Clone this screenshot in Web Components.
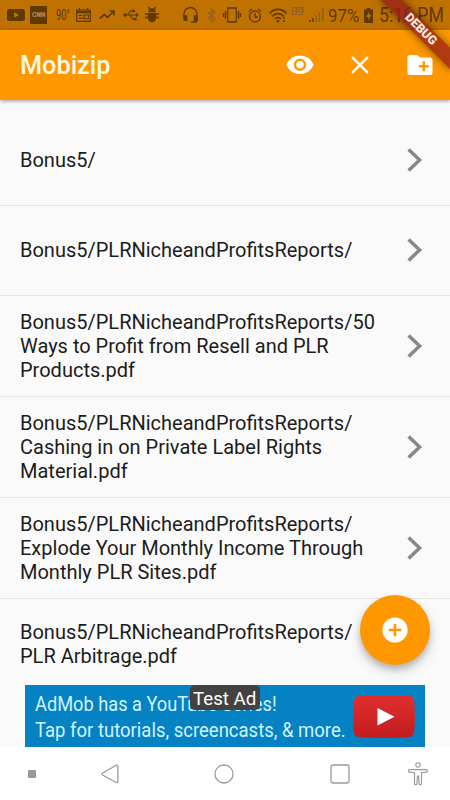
<!DOCTYPE html>
<html lang="en">
<head>
<meta charset="utf-8">
<title>Mobizip</title>
<style>
html,body{margin:0;padding:0;background:#fafafa}
</style>
</head>
<body>
<mobizip-app></mobizip-app>
<script>
const define = (name, html, setup) => customElements.define(name, class extends HTMLElement {
  connectedCallback() {
    if (this.shadowRoot) return;
    const t = document.createElement('template');
    t.innerHTML = html;
    this.attachShadow({mode: 'open'}).append(t.content.cloneNode(true));
    if (setup) setup(this, this.shadowRoot);
  }
});

/* Single line of text, condensed or expanded to a given width. */
define('fit-text', `<style>
:host{display:block;white-space:nowrap;flex:none}
span{display:inline-block;transform-origin:0 50%}
</style><span><slot></slot></span>`, (el, root) => {
  const w = +el.getAttribute('width'), s = root.querySelector('span');
  el.style.width = w + 'px';
  s.style.transform = `scaleX(${w / s.offsetWidth})`;
});

const icons = {
youtube:[18,12,'<rect width="18" height="12" rx="2.5" fill="#603900"/><path d="M7 3.2v5.6L12 6z" fill="#bf7200"/>'],
news:[15,14,'<path d="M.7 2h13.6v11.3H.7z" fill="none" stroke="#603900" stroke-width="1.2"/><path d="M0 4h15" stroke="#603900" stroke-width="2.4"/><path d="M3.5 0v2M11.5 0v2M2.8 7.4h3.6M2.8 10.2h3.6" fill="none" stroke="#603900" stroke-width="1.2"/><path d="M8 7h4.500v3.800H8z" fill="none" stroke="#603900" stroke-width="1.1"/>'],
trend:[16,10,'<path d="M.8 8.500l4.600-4.100 3 3L14 2M10.800 1H15v4.200" fill="none" stroke="#603900" stroke-width="1.700"/>'],
usb:[16,12,'<g fill="none" stroke="#603900" stroke-width="1.2"><path d="M2 6h12M4.500 6l3-4h2M7 6l2.500 4h2"/></g><circle cx="2" cy="6" r="1.800" fill="#603900"/><path d="M13 3.800L16 6l-3 2.200zM9 .7h3v2.600H9zM10.500 8.700h3v2.600h-3z" fill="#603900"/>'],
bug:[14,16,'<path d="M3.500 5.200a3.500 4 0 0 1 7 0zM2.700 6.300h8.600v4.200a4.300 5 0 0 1-8.600 0z" fill="#603900"/><path d="M3.500 0l1.300 2M10.500 0L9.200 2M0 7h14M0 10.500h14" stroke="#603900" stroke-width="1.400"/>'],
headset:[15,16,'<path d="M1 9V7a6.500 6.500 0 0 1 13 0v6.500c0 1-.5 1.500-1.500 1.500H8" fill="none" stroke="#603900" stroke-width="1.400"/><path d="M.3 8.300h4V14H2.200C1 14 .3 13.200.3 12zM10.700 8.300h4V14h-4z" fill="#603900"/>'],
bluetooth:[9,15,'<path d="M.8 4l7 6.800L4.500 14V1l3.300 3.200L.8 11" fill="none" stroke="#906026" stroke-width="1.300"/>'],
vibrate:[18,16,'<path d="M4.700 1h8.600v14H4.700zM2.500 4v8M.6 6v4M15.500 4v8M17.400 6v4" fill="none" stroke="#603900" stroke-width="1.300"/>'],
alarm:[14,15,'<circle cx="7" cy="8.500" r="5.500" fill="none" stroke="#603900" stroke-width="1.300"/><path d="M7 5v4h3M.7 3.600L4 1M13.300 3.600L10 1" fill="none" stroke="#603900" stroke-width="1.300"/>'],
wifi:[18,15,'<path d="M.7 5.300c4.700-5.200 12-5.200 16.600 0M3.200 8.300c3.200-3.600 8.300-3.600 11.500 0M6 11c1.800-1.900 4.200-1.900 6 0" fill="none" stroke="#603900" stroke-width="1.800"/><circle cx="9" cy="13.200" r="1.300" fill="#603900"/><path d="M14 10h2M14 13h2" stroke="#603900" stroke-width="1.500"/>'],
signal:[15,14,'<path d="M1 12v2M4 10v4" stroke="#603900" stroke-width="1.500"/><path d="M7.200 7v7M10.400 4v10M13.800 0v14" stroke="#96601c" stroke-width="1.500"/>'],
battery:[9,15,'<path d="M2.800 0h3.400v1.500H9V15H0V1.500h2.800z" fill="#603900"/><path d="M5.500 3.500L2 9h2.300v3.500L7.200 7H5z" fill="#bf7200"/>'],
eye:[28,20,'<path fill="#fff" d="M14 .5C7.800.5 2.500 4.300.4 9.800 2.500 15.300 7.800 19.100 14 19.100s11.500-3.800 13.600-9.300C25.500 4.300 20.200.5 14 .5zm0 15.500a6.200 6.200 0 1 1 0-12.400 6.200 6.200 0 0 1 0 12.400zm0-9.900a3.700 3.700 0 1 0 0 7.400 3.700 3.700 0 0 0 0-7.400z"/>'],
close:[18,18,'<path d="M1.100 1.100l15.800 15.800M16.900 1.100L1.100 16.900" stroke="#fff" stroke-width="2.400"/>'],
folder:[26,20,'<path fill="#fff" fill-rule="evenodd" d="M23 2.500H13L10.500 0H3A2.500 2.500 0 0 0 .5 2.500v15A2.500 2.500 0 0 0 3 20h20a2.500 2.500 0 0 0 2.500-2.500V5A2.500 2.500 0 0 0 23 2.500zM21.700 12.500H18v3.750h-2.500V12.500h-3.700V10h3.700V6.250H18V10h3.700z"/>'],
chevron:[16,24,'<path d="M1.600 1.500L12.600 12 1.600 22.500" fill="none" stroke="#888" stroke-width="3.500"/>'],
add:[26,26,'<circle cx="13" cy="13" r="12.600" fill="#fff"/><path d="M13 6.700v12.600M6.700 13h12.600" stroke="#ff9800" stroke-width="2.500"/>'],
play:[62,43,'<defs><linearGradient id="g" x2="0" y2="1"><stop stop-color="#e02f2f"/><stop offset="1" stop-color="#c21c1f"/></linearGradient></defs><path fill="url(#g)" d="M7 .8Q31-.8 55 .8q6 .4 6.400 6.500 1 14.200 0 28.400-.4 6.100-6.400 6.500-24 1.600-48 0-6-.4-6.400-6.500-1-14.200 0-28.400Q1 1.200 7 .8z"/><path d="M24.500 13v17.500l17-8.700z" fill="#fff"/>'],
dot:[8,8,'<rect width="8" height="8" rx="1" fill="#9a9a9a"/>'],
back:[18,20,'<path d="M15.200 1.300L2 8.700c-1.300.8-1.300 1.900 0 2.600l13.200 7.200c1 .5 1.700 0 1.700-1V2.300c0-1-.7-1.500-1.700-1z" fill="none" stroke="#9a9a9a" stroke-width="1.300"/>'],
home:[20,20,'<circle cx="10" cy="10" r="9" fill="none" stroke="#9a9a9a" stroke-width="1.300"/>'],
recent:[20,20,'<rect x="1" y="1" width="18" height="18" rx="1.800" fill="none" stroke="#9a9a9a" stroke-width="1.300"/>'],
person:[20,24,'<g fill="none" stroke="#9a9a9a" stroke-width="1.200"><circle cx="10" cy="3" r="2.200"/><path d="M1.500 7.700h17c1.200 0 1.200 2.500 0 2.500l-5 .5v11.100c0 1.200-2.200 1.200-2.400 0L10.500 14h-1L8.900 21.800c-.2 1.200-2.400 1.200-2.400 0V10.700l-5-.5C.3 10.200.3 7.700 1.500 7.700z"/></g>']
};
define('m-icon', `<style>:host{display:block;flex:none}svg{display:block;overflow:visible}</style>`, (el, root) => {
  const [w, h, body] = icons[el.getAttribute('name')];
  root.innerHTML += `<svg width="${w}" height="${h}" viewBox="0 0 ${w} ${h}">${body}</svg>`;
});

define('status-bar', `<style>
:host{display:flex;height:30px;box-sizing:border-box;padding-left:7px;background:#bf7200;color:#603900;align-items:center;font:19.5px/30px Roboto,sans-serif}
.net{font-size:7px;font-weight:700;border:1px solid #96601c;color:#96601c;box-sizing:border-box;height:8px;margin-top:-8px;margin-left:5px;line-height:6px}
.cnn{margin-left:5px;width:17px;height:18px;box-sizing:border-box;padding-left:2px;background:#603900;color:#b58a55;font:900 8px/18px Roboto,sans-serif}
</style>
<m-icon name="youtube"></m-icon>
<div class="cnn"><fit-text width="13">CNN</fit-text></div>
<fit-text width="14" style="margin-left:9px;font-size:15.5px">90°</fit-text>
<m-icon name="news" style="margin-left:6px"></m-icon>
<m-icon name="trend" style="margin-left:8px"></m-icon>
<m-icon name="usb" style="margin-left:8px"></m-icon>
<m-icon name="bug" style="margin-left:6px"></m-icon>
<m-icon name="headset" style="margin-left:24px"></m-icon>
<m-icon name="bluetooth" style="margin-left:9px"></m-icon>
<m-icon name="vibrate" style="margin-left:7px"></m-icon>
<m-icon name="alarm" style="margin-left:7px"></m-icon>
<m-icon name="wifi" style="margin-left:7px"></m-icon>
<fit-text class="net" width="11">4G</fit-text>
<m-icon name="signal" style="margin-left:6px"></m-icon>
<fit-text width="31" style="margin-left:3.5px;font-size:18px;padding-top:1px">97%</fit-text>
<m-icon name="battery" style="margin-left:5.5px"></m-icon>
<fit-text width="65" style="margin-left:5.5px;padding-top:2px">5:16 PM</fit-text>`);

define('app-bar', `<style>
:host{display:flex;position:relative;z-index:1;height:70px;align-items:center;background:#ff9800;padding:0 19px 0 20px;box-sizing:border-box;box-shadow:0 1px 4px rgba(0,0,0,.4)}
h1{margin:0;flex:1;font:500 25px/30px Roboto,sans-serif;color:#fff8e4;padding-top:1px}
nav{display:flex;align-items:center}
</style><h1><fit-text width="90"><slot></slot></fit-text></h1><nav>
<m-icon name="eye"></m-icon><m-icon name="close" style="margin-left:37px"></m-icon><m-icon name="folder" style="margin:0 -2px 0 38px"></m-icon></nav>`);

define('file-row', `<style>
:host{display:flex;box-sizing:border-box;height:90px;border-bottom:1px solid #e6e6e6;padding:0 27px 0 20px;align-items:center;justify-content:space-between}
:host([tall]){height:101.2px}
:host(:last-of-type){border-bottom-color:transparent}
.t{font:20px/23.8px Roboto,sans-serif;color:#1c1c1c;white-space:nowrap;padding-top:1px}
:host([tall]) .t{padding-top:2px}
:host(:last-of-type) .t{padding-top:3px}
</style><div class="t"><slot></slot></div><m-icon name="chevron"></m-icon>`);

define('ad-banner', `<style>
:host{display:flex;position:relative;width:400px;height:62px;box-sizing:border-box;background:#0482c3;color:#d3f3ff;font:21px/26px Roboto,sans-serif;padding:6px 10px 0;justify-content:space-between}
.badge{position:absolute;left:165px;top:0;width:70px;height:25px;border-radius:5px;background:#424242;color:#fff;box-sizing:border-box;padding-left:3px;font:19px/27px Roboto,sans-serif}
m-icon{margin:4px .3px 0 0}
</style><div><fit-text width="242">AdMob has a YouTube Series!</fit-text><fit-text width="311">Tap for tutorials, screencasts, &amp; more.</fit-text></div>
<m-icon name="play"></m-icon><div class="badge"><fit-text width="63">Test Ad</fit-text></div>`);

define('nav-bar', `<style>
:host{display:flex;height:53px;box-sizing:border-box;background:#fff;align-items:center;padding:1px 22px 0 28px}
</style><m-icon name="dot"></m-icon><m-icon name="back" style="margin-left:64.5px"></m-icon><m-icon name="home" style="margin-left:95.5px"></m-icon><m-icon name="recent" style="margin-left:96px"></m-icon><m-icon name="person" style="margin-left:auto"></m-icon>`);

define('debug-banner', `<style>
:host{position:absolute;right:0;top:0;width:90px;height:90px;overflow:hidden;z-index:5}
div{position:absolute;left:40px;top:34px;width:100px;height:15px;transform-origin:50% -34px;transform:rotate(45deg);background:rgba(150,28,26,.75);box-shadow:0 0 8px rgba(0,0,0,.5);color:#ffe9df;text-align:center;font:900 12.3px/14px Roboto,sans-serif}
</style><div><slot></slot></div>`);

define('add-button', `<style>
:host{position:absolute;left:360px;top:595px;width:70px;height:70px;border-radius:50%;background:#ff9800;display:flex;align-items:center;justify-content:center;box-shadow:0 4px 6px rgba(0,0,0,.18),0 6px 13px rgba(0,0,0,.15);z-index:2}
</style><m-icon name="add"></m-icon>`);

define('mobizip-app', `<style>
:host{display:flex;flex-direction:column;position:relative;width:450px;height:800px;overflow:hidden;background:#fafafa}
main{flex:1;min-height:0;overflow:hidden;padding-top:15.6px;box-sizing:border-box}
ad-banner{position:absolute;left:25px;top:685px;z-index:1}
</style>
<status-bar></status-bar>
<app-bar>Mobizip</app-bar>
<main>
<file-row>Bonus5/</file-row>
<file-row>Bonus5/PLRNicheandProfitsReports/</file-row>
<file-row tall>Bonus5/PLRNicheandProfitsReports/50<br>Ways to Profit from Resell and PLR<br>Products.pdf</file-row>
<file-row tall>Bonus5/PLRNicheandProfitsReports/<br>Cashing in on Private Label Rights<br>Material.pdf</file-row>
<file-row tall>Bonus5/PLRNicheandProfitsReports/<br>Explode Your Monthly Income Through<br>Monthly PLR Sites.pdf</file-row>
<file-row>Bonus5/PLRNicheandProfitsReports/<br>PLR Arbitrage.pdf</file-row>
</main>
<ad-banner></ad-banner>
<nav-bar></nav-bar>
<add-button></add-button>
<debug-banner>DEBUG</debug-banner>`);
</script>
</body>
</html>
